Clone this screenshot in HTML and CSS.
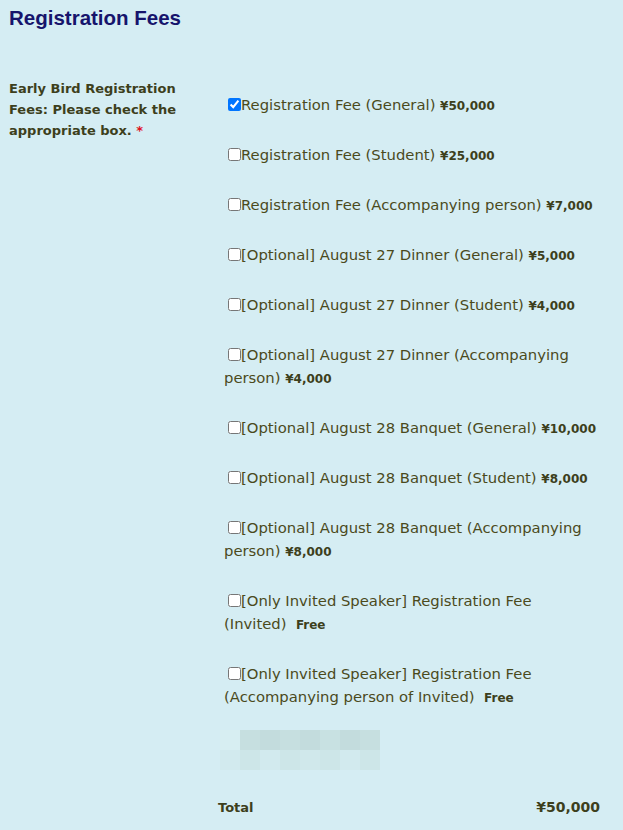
FILE: index.html
```html
<!DOCTYPE html>
<html>
  <head>
    <link rel="stylesheet" href="styles.css">
  </head>
  <body>
    <h2 class="section-title">Registration Fees</h2>

    <div class="fee-row">
      <div class="fee-label">
        Early Bird Registration Fees: Please check the appropriate box.
        <span class="required">*</span>
      </div>

      <div class="fee-options">
        <label class="option"><input type="checkbox" checked>Registration Fee (General) <span class="price">¥50,000</span></label>
        <label class="option"><input type="checkbox">Registration Fee (Student) <span class="price">¥25,000</span></label>
        <label class="option"><input type="checkbox">Registration Fee (Accompanying person) <span class="price">¥7,000</span></label>
        <label class="option"><input type="checkbox">[Optional] August 27 Dinner (General) <span class="price">¥5,000</span></label>
        <label class="option"><input type="checkbox">[Optional] August 27 Dinner (Student) <span class="price">¥4,000</span></label>
        <label class="option"><input type="checkbox">[Optional] August 27 Dinner (Accompanying person) <span class="price">¥4,000</span></label>
        <label class="option"><input type="checkbox">[Optional] August 28 Banquet (General) <span class="price">¥10,000</span></label>
        <label class="option"><input type="checkbox">[Optional] August 28 Banquet (Student) <span class="price">¥8,000</span></label>
        <label class="option"><input type="checkbox">[Optional] August 28 Banquet (Accompanying person) <span class="price">¥8,000</span></label>
        <label class="option"><input type="checkbox">[Only Invited Speaker] Registration Fee (Invited)&nbsp;&nbsp;<span class="price">Free</span></label>
        <label class="option"><input type="checkbox">[Only Invited Speaker] Registration Fee (Accompanying person of Invited)&nbsp;&nbsp;<span class="price">Free</span></label>

        <div class="blurred">
          <div class="blur-line top">
            <span class="px a"></span><span class="px b"></span><span class="px c"></span><span class="px b"></span><span class="px c"></span><span class="px d"></span><span class="px c"></span><span class="px b"></span>
          </div>
          <div class="blur-line bottom">
            <span class="px e"></span><span class="px f"></span><span class="px e"></span><span class="px f"></span><span class="px g"></span><span class="px f"></span><span class="px e"></span><span class="px f"></span>
          </div>
        </div>
      </div>
    </div>

    <div class="total-row">
      <span class="total-label">Total</span>
      <span class="total-value">¥50,000</span>
    </div>
  </body>
</html>
```

FILE: styles.css
```css
body {
  margin: 0;
  padding: 0 9px;
  background-color: #d5edf3;
  font-family: "DejaVu Sans", Verdana, sans-serif;
  color: #4b4a1c;
}

.section-title {
  margin: 6px 0 0;
  font-family: "Liberation Sans", Arial, sans-serif;
  font-size: 20.5px;
  line-height: 24px;
  color: #16146c;
}

.fee-row {
  display: grid;
  grid-template-columns: 215px 380px;
  margin-top: 48px;
}

.fee-label {
  font-size: 13px;
  font-weight: bold;
  line-height: 21px;
  color: #3d3f1c;
  padding-right: 20px;
}

.required {
  color: #e0101c;
}

.fee-options {
  display: flex;
  flex-direction: column;
  padding-top: 15px;
}

.option {
  display: block;
  font-size: 14.8px;
  line-height: 23px;
  margin-bottom: 27px;
  text-indent: 4px;
}

.option input {
  width: 13px;
  height: 13px;
  margin: 0;
  vertical-align: -1px;
}

.option:last-of-type {
  margin-bottom: 0;
}

.price {
  font-size: 12px;
  line-height: 1;
  font-weight: bold;
  color: #3d3f1c;
}

.blurred {
  margin-top: 22px;
  width: 160px;
  margin-left: -4px;
}

.blur-line {
  display: flex;
  height: 20px;
}

.px {
  width: 20px;
  height: 20px;
}

.a { background: #d7eef2; }
.b { background: #c6dfe0; }
.c { background: #c3dcdd; }
.d { background: #c8e1e2; }
.e { background: #d2eaee; }
.f { background: #cde6e8; }
.g { background: #d0e8eb; }

.total-row {
  display: flex;
  justify-content: space-between;
  align-items: baseline;
  width: 382px;
  margin: 29px 0 0 209px;
  font-weight: bold;
  color: #3d3f1c;
}

.total-label {
  font-size: 13px;
}

.total-value {
  font-size: 14px;
}
```
